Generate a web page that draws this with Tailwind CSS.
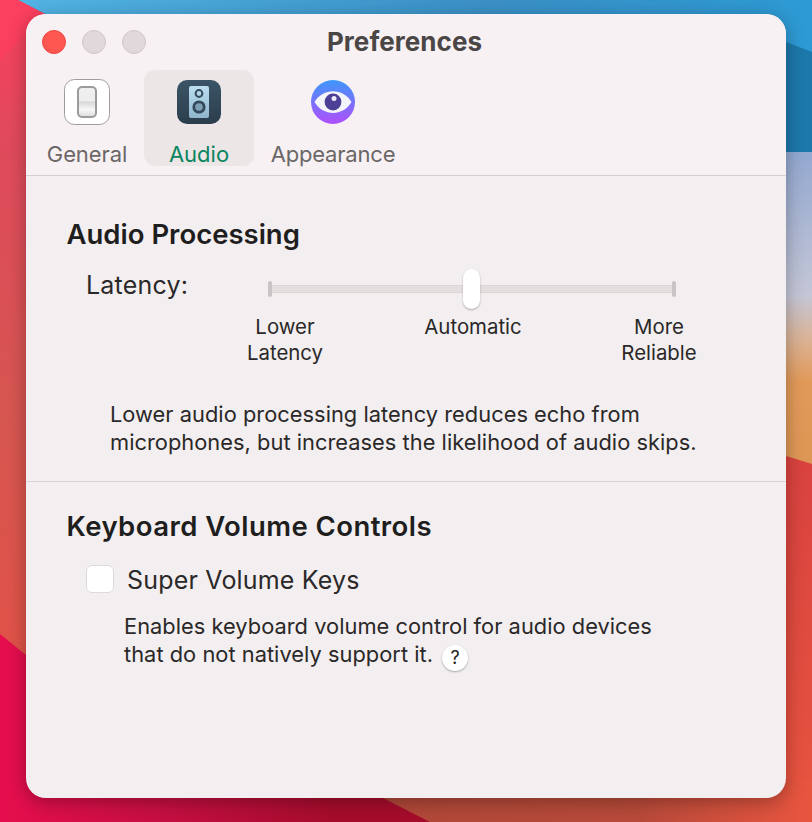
<!DOCTYPE html>
<html lang="en">
<head>
<meta charset="utf-8">
<script src="https://cdn.jsdelivr.net/npm/@tailwindcss/browser@4"></script>
<title>Preferences</title>
</head>
<body class="m-0 overflow-hidden">
<div class="relative w-[812px] h-[822px] overflow-hidden font-['Inter',sans-serif] bg-[#c8102e]">
  <svg class="absolute inset-0" width="812" height="822" viewBox="0 0 812 822" aria-hidden="true">
    <defs>
      <linearGradient id="blue" x1="0" y1="0" x2="1" y2="0">
        <stop offset="0" stop-color="#52b4e4"/><stop offset="0.6" stop-color="#3a90c6"/><stop offset="1" stop-color="#2d9ad4"/>
      </linearGradient>
      <linearGradient id="left" x1="0" y1="0" x2="0" y2="1">
        <stop offset="0" stop-color="#fb3f5e"/><stop offset="0.2" stop-color="#e04a5c"/><stop offset="0.6" stop-color="#d65650"/><stop offset="1" stop-color="#e25146"/>
      </linearGradient>
      <linearGradient id="right" x1="0" y1="460" x2="0" y2="822" gradientUnits="userSpaceOnUse">
        <stop offset="0" stop-color="#d9423f"/><stop offset="1" stop-color="#e8553f"/>
      </linearGradient>
      <linearGradient id="strip" x1="380" y1="0" x2="812" y2="0" gradientUnits="userSpaceOnUse">
        <stop offset="0" stop-color="#b04838"/><stop offset="0.6" stop-color="#b84a3a"/><stop offset="1" stop-color="#e8553f"/>
      </linearGradient>
      <linearGradient id="side" x1="0" y1="152" x2="0" y2="470" gradientUnits="userSpaceOnUse">
        <stop offset="0" stop-color="#93a8d0"/><stop offset="0.45" stop-color="#c4c6d6"/><stop offset="0.58" stop-color="#d9b49a"/><stop offset="0.72" stop-color="#e29a5a"/><stop offset="1" stop-color="#de9655"/>
      </linearGradient>
      <linearGradient id="crimson" x1="0" y1="0" x2="330" y2="0" gradientUnits="userSpaceOnUse">
        <stop offset="0" stop-color="#e60e4e"/><stop offset="0.5" stop-color="#c50f42"/><stop offset="1" stop-color="#a60c2c"/>
      </linearGradient>
    </defs>
    <rect x="400" width="412" height="822" fill="url(#right)"/>
    <rect x="0" y="0" width="400" height="700" fill="url(#left)"/>
    <rect x="300" y="780" width="512" height="42" fill="url(#strip)"/>
    <polygon points="0,634 26,655 383,798 430,822 0,822" fill="url(#crimson)"/>
    <polygon points="760,140 812,140 812,464 760,448" fill="url(#side)"/>
    <polygon points="18,0 812,0 812,152 30,152 45,14" fill="url(#blue)"/>
    <polygon points="700,14 786,42 812,52 812,152 700,152" fill="#1c78aa"/>
    <polygon points="0,0 18,0 45,14 30,30 0,60" fill="#fb3f5e"/>
  </svg>

  <main class="absolute left-[26px] top-[14px] w-[760px] h-[784px] rounded-[20px] overflow-hidden bg-[#f3eeef] shadow-[0_4px_18px_rgba(0,0,0,0.3)] flex flex-col">
    <header class="relative h-[162px] shrink-0 bg-[#f8f1f3] border-b border-[#d4cfd0]">
      <div class="absolute left-[16px] top-[16px] flex gap-[16px]">
        <span class="w-[24px] h-[24px] rounded-full bg-[#fe5650] border border-[#e8453f]"></span>
        <span class="w-[24px] h-[24px] rounded-full bg-[#e0d8da] border border-[#cfc6c8]"></span>
        <span class="w-[24px] h-[24px] rounded-full bg-[#e0d8da] border border-[#cfc6c8]"></span>
      </div>
      <h1 class="pt-[11px] pr-[3px] text-center text-[26px] leading-[34px] font-bold text-[#4a4646] tracking-[0.05px]">Preferences</h1>
      <nav class="absolute left-0 top-[56px] flex items-start">
        <div class="w-[118px] h-[96px] pl-[4px] flex flex-col items-center pt-[9px]">
          <svg width="46" height="46" viewBox="0 0 46 46" class="shrink-0" aria-hidden="true">
            <defs><linearGradient id="sw" x1="0" y1="0" x2="0" y2="1"><stop offset="0" stop-color="#efefef"/><stop offset="0.46" stop-color="#eeeeee"/><stop offset="0.5" stop-color="#d8d8d8"/><stop offset="0.75" stop-color="#f7f7f7"/><stop offset="1" stop-color="#dcdcdc"/></linearGradient></defs>
            <rect x="0.5" y="0.5" width="45" height="45" rx="10" fill="#fff" stroke="#a09c9c"/>
            <rect x="14" y="8" width="18" height="30" rx="4" fill="url(#sw)" stroke="#9c9a9a" stroke-width="2"/>
          </svg>
          <span class="mt-[14px] shrink-0 text-[22px] leading-[30px] tracking-[-0.1px] text-[#6b6767]">General</span>
        </div>
        <div class="w-[110px] h-[96px] rounded-[11px] bg-[#ece6e6] flex flex-col items-center pt-[10px]">
          <svg width="44" height="44" viewBox="0 0 44 44" class="shrink-0" aria-hidden="true">
            <defs>
              <linearGradient id="spk" x1="0" y1="0" x2="0" y2="1"><stop offset="0" stop-color="#3b5566"/><stop offset="1" stop-color="#2b3d4c"/></linearGradient>
              <linearGradient id="spf" x1="0" y1="0" x2="0" y2="1"><stop offset="0" stop-color="#bcdff0"/><stop offset="1" stop-color="#8fb6cd"/></linearGradient>
            </defs>
            <rect width="44" height="44" rx="10" fill="url(#spk)"/>
            <rect x="12" y="6" width="20" height="32" rx="2" fill="url(#spf)"/>
            <circle cx="22" cy="13.5" r="3.4" fill="none" stroke="#34495a" stroke-width="2"/>
            <circle cx="22" cy="27" r="5.2" fill="#7f9fb4" stroke="#34495a" stroke-width="2.8"/>
          </svg>
          <span class="mt-[15px] shrink-0 text-[22px] leading-[30px] text-[#0a8560]">Audio</span>
        </div>
        <div class="w-[158px] h-[96px] flex flex-col items-center pt-[10px]">
          <svg width="44" height="44" viewBox="0 0 44 44" class="shrink-0" aria-hidden="true">
            <defs><linearGradient id="eye" x1="0" y1="0" x2="0" y2="1"><stop offset="0" stop-color="#3d97fb"/><stop offset="1" stop-color="#b04ffb"/></linearGradient></defs>
            <circle cx="22" cy="22" r="22" fill="url(#eye)"/>
            <path d="M3.5 22 C12 7.5 32 7.5 40.5 22 C32 36.5 12 36.5 3.5 22Z" fill="#f4f4fb"/>
            <circle cx="22" cy="22" r="8.4" fill="#4c3f96"/>
            <circle cx="23" cy="18.5" r="2.5" fill="#ece9f8"/>
          </svg>
          <span class="mt-[15px] shrink-0 text-[22px] leading-[30px] tracking-[-0.2px] text-[#6b6767]">Appearance</span>
        </div>
      </nav>
    </header>

    <section class="h-[306px] shrink-0 border-b border-[#d8d3d4] pl-[40.5px] pr-[41px] pt-[41px] text-[#2a2828]">
      <h2 class="text-[27.5px] leading-[34px] font-semibold text-[#1f1e1e]">Audio Processing</h2>
      <div class="flex items-start mt-[19px] ml-[0.5px]">
        <span class="ml-[19px] -mt-[1px] w-[182px] text-[25px] leading-[32px] tracking-[0.2px]">Latency:</span>
        <div class="relative w-[408px] h-[40px] -mt-[1px] flex items-center">
          <div class="w-full h-[8px] bg-[#e4dede] border-y border-[#dcd6d6]"></div>
          <span class="absolute left-0 top-[12px] w-[4px] h-[16px] rounded-[2px] bg-[#c9c4c4]"></span>
          <span class="absolute right-0 top-[12px] w-[4px] h-[16px] rounded-[2px] bg-[#c9c4c4]"></span>
          <span class="absolute left-[195px] top-0 w-[17px] h-[40px] rounded-full bg-white shadow-[0_1px_2px_rgba(0,0,0,0.3)]"></span>
        </div>
      </div>
      <div class="flex mt-[5px] ml-[0.5px] text-[20.4px] leading-[26px] text-center">
        <span class="ml-[158px] w-[120px]">Lower<br>Latency</span>
        <span class="ml-[68px] w-[120px]">Automatic</span>
        <span class="ml-[66px] w-[120px]">More<br>Reliable</span>
      </div>
      <p class="ml-[43.5px] mt-[34px] text-[21.8px] leading-[28px] tracking-[0.04px]">Lower audio processing latency reduces echo from<br>microphones, but increases the likelihood of audio skips.</p>
    </section>

    <section class="pl-[40.5px] pr-[41px] pt-[27px] text-[#2a2828]">
      <h2 class="text-[27.5px] leading-[34px] font-semibold tracking-[0.45px] text-[#1f1e1e]">Keyboard Volume Controls</h2>
      <div class="flex items-center mt-[21px] ml-[19.5px]">
        <span class="w-[28px] h-[28px] -mt-[2px] rounded-[6px] bg-white border border-[#dedada]"></span>
        <span class="ml-[13px] text-[25px] leading-[32px] tracking-[0.18px]">Super Volume Keys</span>
      </div>
      <p class="ml-[57.5px] mt-[16px] text-[21.8px] leading-[28px] tracking-[0.04px]">Enables keyboard volume control for audio devices<br>that do not natively support it. <span class="inline-flex align-middle ml-[3px] translate-y-[2px] items-center justify-center w-[26px] h-[26px] rounded-full bg-white shadow-[0_1px_2px_rgba(0,0,0,0.3)] text-[18px] leading-none font-normal text-[#222]">?</span></p>
    </section>
  </main>
</div>
</body>
</html>
